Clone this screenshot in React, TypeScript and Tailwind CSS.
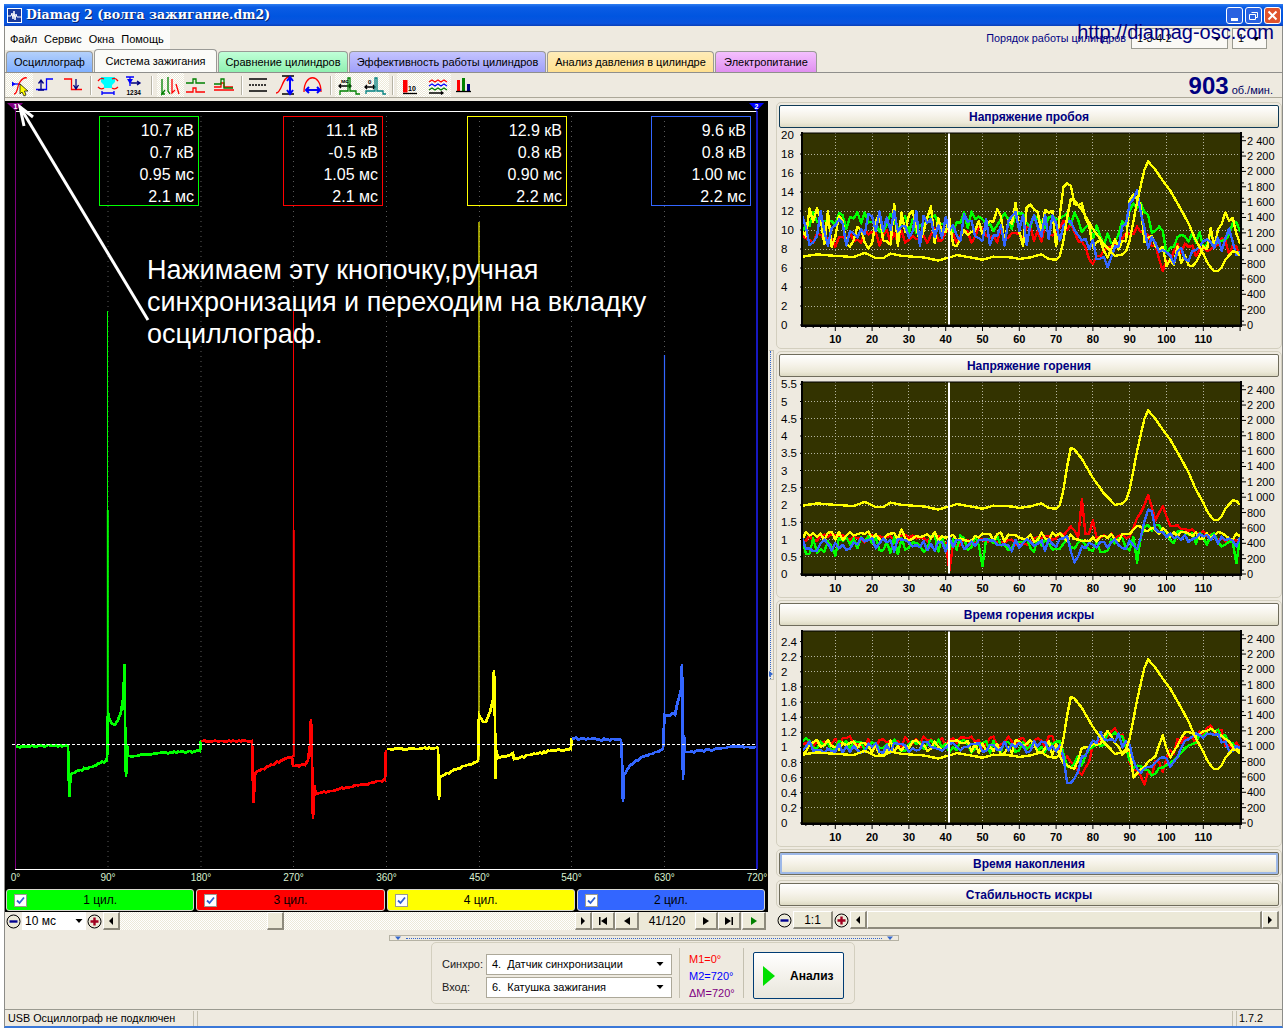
import type { ReactNode } from 'react'

type Pt = [number, number]
type Series = { color: string; base: Pt[]; amp: number; amp2: number; seed: number }

const GREEN = '#00ff00'
const RED = '#ff0000'
const YELLOW = '#ffff00'
const BLUE = '#3366ff'

function rnd(seed: number, n: number) {
  const v = Math.sin(n * 12.9898 + seed * 78.233) * 43758.5453
  return (v - Math.floor(v)) * 2 - 1
}

function interp(a: Pt[], n: number) {
  if (n <= a[0][0]) return a[0][1]
  for (let i = 1; i < a.length; i++) {
    if (n <= a[i][0]) {
      const t = (n - a[i - 1][0]) / (a[i][0] - a[i - 1][0])
      return a[i - 1][1] + (a[i][1] - a[i - 1][1]) * t
    }
  }
  return a[a.length - 1][1]
}

const RPM: Pt[] = [[1,890],[5,920],[10,900],[15,885],[18,940],[21,870],[23,870],[25,930],[28,900],[34,880],[38,840],[41,880],[43,910],[48,870],[50,850],[53,890],[58,880],[60,860],[63,880],[66,920],[68,860],[70,850],[71,900],[72,1100],[73,1400],[74,1640],[75,1620],[77,1500],[80,1250],[83,1050],[86,900],[88,920],[89,960],[90,1100],[91,1350],[92,1600],[94,2020],[95,2130],[97,2020],[99,1880],[101,1750],[104,1500],[106,1320],[108,1100],[110,930],[111,820],[112,750],[113,700],[114,700],[115,750],[116,850],[118,960],[119,950],[120,900]]

const breakdown: Series[] = [
  { color: RED, seed: 1, amp: 0.9, amp2: 0.7, base: [[1,9],[70,9.6],[72,11],[75,10],[78,7.5],[80,7],[85,8],[90,10],[94,9.5],[97,8],[99,6],[102,8],[107,8],[110,7.5],[115,8.5],[120,7.5]] },
  { color: GREEN, seed: 2, amp: 1.2, amp2: 1, base: [[1,10.8],[70,10.8],[75,11],[80,9.5],[82,10],[85,8],[88,10],[92,13],[94,12],[97,10],[100,8.5],[105,8.5],[108,9],[115,9],[118,11],[120,9.5]] },
  { color: YELLOW, seed: 3, amp: 2.4, amp2: 1.4, base: [[1,10.3],[70,10.5],[72,14.5],[75,13],[78,11.5],[80,9.5],[83,7.5],[87,8],[89,10],[91,14],[93,12],[95,8],[97,8],[98,9],[100,7.5],[104,7],[107,6],[109,8],[112,9],[114,10],[117,12],[120,9]] },
  { color: BLUE, seed: 4, amp: 1.9, amp2: 1, base: [[1,10.2],[70,10.2],[75,10.5],[78,9],[82,7.5],[85,6.5],[90,12],[92,14.5],[95,9],[98,8.5],[100,7],[105,7.5],[110,8],[115,8.5],[117,10],[119,8]] },
]

const burn: Series[] = [
  { color: RED, seed: 5, amp: 0.12, amp2: 0.08, base: [[1,1.05],[40,1],[41,0],[42,0.9],[70,1],[74,1.4],[76,1.1],[77,2.1],[78,1.1],[79,1.1],[80,1.5],[81,1.1],[90,1.1],[95,2.3],[97,1.6],[99,1.9],[101,1.4],[110,1.2],[115,1],[120,1]] },
  { color: GREEN, seed: 6, amp: 0.28, amp2: 0.22, base: [[1,0.85],[9,0.85],[10,0.4],[11,0.85],[26,0.85],[27,0.4],[28,0.85],[49,0.85],[50,0.4],[51,0.85],[91,0.85],[92,0.3],[93,0.85],[95,1.5],[100,1.1],[118,1],[119,0.3],[120,0.9]] },
  { color: YELLOW, seed: 7, amp: 0.14, amp2: 0.12, base: [[1,1.1],[27,1.1],[28,1.35],[29,1.1],[90,1.05],[93,1.4],[100,1.2],[120,1.05]] },
  { color: BLUE, seed: 8, amp: 0.2, amp2: 0.16, base: [[1,0.85],[70,0.85],[73,1.2],[75,0.4],[77,0.9],[90,0.85],[92,0.6],[95,1.9],[98,1.2],[105,1.05],[120,0.95]] },
]

const spark: Series[] = [
  { color: RED, seed: 9, amp: 0.08, amp2: 0.09, base: [[1,1.07],[71,1.07],[72,0.9],[74,0.75],[77,0.65],[80,1],[85,1.2],[88,1.15],[91,0.7],[94,0.55],[97,0.8],[99,0.7],[102,1],[107,1.1],[112,1.25],[116,1.1],[120,1]] },
  { color: GREEN, seed: 10, amp: 0.09, amp2: 0.09, base: [[1,1.03],[71,1],[74,0.7],[77,0.85],[82,1.1],[88,1.15],[91,0.7],[96,0.7],[100,0.85],[106,1],[112,1.2],[120,1]] },
  { color: YELLOW, seed: 11, amp: 0.1, amp2: 0.02, base: [[1,1],[70,1],[72,0.8],[75,0.7],[77,1],[82,1.05],[84,1.2],[88,0.92],[90,1],[91,0.6],[93,0.7],[97,0.9],[99,1.15],[101,0.85],[105,1.2],[108,1.15],[112,1.25],[116,1.1],[120,0.95]] },
  { color: BLUE, seed: 12, amp: 0.08, amp2: 0.08, base: [[1,1],[71,1],[73,0.6],[75,0.6],[78,0.9],[82,1.15],[86,1.15],[90,1],[92,0.65],[96,0.7],[99,0.9],[101,0.8],[105,1.1],[112,1.2],[116,1],[120,1]] },
]

const X = (n: number) => 56.3 + (n - 10) * 3.68

function Chart({ labels, unit, data }: { labels: string[]; unit: number; data: Series[] }) {
  const samples = Array.from({ length: 120 }, (_, i) => i + 1)
  const line = (s: Series) =>
    samples
      .map((n) => {
        const v = interp(s.base, n) + rnd(s.seed, n) * (n <= 71 ? s.amp : s.amp2)
        return `${X(n).toFixed(1)},${Math.min(195, 196 - v * unit).toFixed(1)}`
      })
      .join(' ')
  const rpmLine = samples.map((n) => `${X(n).toFixed(1)},${(196 - (interp(RPM, n) * 184.3) / 2400).toFixed(1)}`).join(' ')
  const rpmTicks = Array.from({ length: 13 }, (_, i) => i * 200)
  return (
    <svg width={500} height={218} viewBox="0 -1 500 218" className="block">
      <rect x={23} y={4} width={439} height={192} fill="#333300" />
      {labels.map((l, i) => {
        const y = 196 - parseFloat(l) * unit
        return (
          <g key={l}>
            {i > 0 && <line x1={23} x2={462} y1={y} y2={y} stroke="#b4b4a0" strokeDasharray="1 2" shapeRendering="crispEdges" />}
            <line x1={21} x2={24} y1={y} y2={y} stroke="#000" />
            <text x={2} y={y + 4} fontSize={11.5} fill="#000">{l}</text>
          </g>
        )
      })}
      {[10, 20, 30, 40, 50, 60, 70, 80, 90, 100, 110].map((n) => (
        <g key={n}>
          <line x1={X(n)} x2={X(n)} y1={4} y2={196} stroke="#b4b4a0" strokeDasharray="1 2" shapeRendering="crispEdges" />
          <text x={X(n)} y={214} fontSize={11} fontWeight={700} textAnchor="middle" fill="#000">{n}</text>
        </g>
      ))}
      {samples.filter((n) => n % 2 === 0).map((n) => (
        <line key={n} x1={X(n)} x2={X(n)} y1={196} y2={n % 10 === 0 ? 202 : 199} stroke="#000" />
      ))}
      {rpmTicks.map((r) => {
        const y = 196 - (r * 184.3) / 2400
        return (
          <g key={r}>
            <line x1={462} x2={467} y1={y} y2={y} stroke="#000" />
            <line x1={462} x2={465} y1={y - 3.84} y2={y - 3.84} stroke="#000" />
            <text x={468} y={y + 4} fontSize={11} fill="#000">{r >= 1000 ? `${Math.floor(r / 1000)} ${String(r % 1000).padStart(3, '0')}` : r}</text>
          </g>
        )
      })}
      {data.map((s) => (
        <polyline key={s.seed} points={line(s)} fill="none" stroke={s.color} strokeWidth={2.4} strokeLinejoin="round" shapeRendering="crispEdges" />
      ))}
      <polyline points={rpmLine} fill="none" stroke={YELLOW} strokeWidth={2.4} strokeLinejoin="round" shapeRendering="crispEdges" />
      <line x1={X(41)} x2={X(41)} y1={4} y2={196} stroke="#fff" strokeWidth={2} shapeRendering="crispEdges" />
      <path d="M23 196V4H462V196Z" fill="none" stroke="#000" />
      <path d="M23 3V197H462V3" fill="none" stroke="#000" strokeWidth={2} />
    </svg>
  )
}

function fuzz(points: Pt[], seed: number) {
  const out: string[] = []
  points.forEach((p, i) => {
    if (i > 0) {
      const prev = points[i - 1]
      const dx = p[0] - prev[0]
      if (dx > 6) {
        for (let x = 2; x < dx; x += 2) {
          const y = prev[1] + ((p[1] - prev[1]) * x) / dx + rnd(seed, prev[0] + x) * 0.9
          out.push(`${(prev[0] + x).toFixed(1)},${y.toFixed(1)}`)
        }
      }
    }
    out.push(`${p[0]},${p[1]}`)
  })
  return out.join(' ')
}

const traces: { color: string; pts: Pt[]; spike: [number, number, number, number][] }[] = [
  {
    color: GREEN,
    pts: [[16,746.5],[68,745.5],[68.5,770],[69.5,797],[70.5,775],[72,773],[80,770],[90,767],[100,763],[107,760.5],[108,712],[109,718],[112,724],[115,724.5],[118,720],[121,712],[123,700],[124,680],[124.5,664],[125,720],[126,777],[127,745],[128,756],[140,755],[160,753],[180,752],[200,751],[201,740]],
    spike: [[107.5,311,107.5,510],[107.8,510,107.8,725]],
  },
  {
    color: RED,
    pts: [[201,741],[252,741],[252.5,765],[253.5,803],[255,775],[256,772],[265,768],[280,761],[292,757],[293,766],[295,766],[305,765],[308,760],[310,745],[311,719],[312,760],[313,819],[314,785],[316,794],[330,791],[350,787],[370,783],[385,780],[386,750]],
    spike: [[293.5,311,293.5,530],[293.8,530,293.8,757]],
  },
  {
    color: YELLOW,
    pts: [[387,749],[438,748],[438.5,775],[439,800],[440,778],[441,776],[450,772],[465,766],[478,761],[479,715],[483,722],[486,722],[490,712],[493,700],[494,670],[495,720],[495.5,779],[496,750],[498,758],[510,755],[513,753],[514,759],[530,755],[550,751],[571,749],[571.5,738]],
    spike: [[479,222,479,760]],
  },
  {
    color: BLUE,
    pts: [[572,738.5],[621,740],[622,760],[623,802],[624,775],[626,772],[630,765],[640,758],[655,752],[663,749],[664.5,715],[670,716],[673,713],[675,715],[677,705],[681,690],[682,664],[682.5,720],[683,780],[684,735],[685,752],[690,752],[710,750],[730,747],[756,747]],
    spike: [[664.5,355,664.5,715]],
  },
]

const scopeTicks: [number, string][] = [[15.5,'0°'],[108,'90°'],[201,'180°'],[293.5,'270°'],[386.5,'360°'],[479.5,'450°'],[571.5,'540°'],[664.5,'630°'],[757,'720°']]

function ScopeCanvas() {
  return (
    <svg width={763} height={788} viewBox="5 101 763 788" className="block">
      {scopeTicks.slice(1, 8).map(([x]) => (
        <line key={x} x1={x} x2={x} y1={111} y2={869} stroke="#5a5a5a" strokeDasharray="1 4" />
      ))}
      <line x1={15} x2={757} y1={111.5} y2={111.5} stroke="#fff" />
      <line x1={15} x2={757} y1={869.5} y2={869.5} stroke="#fff" />
      <line x1={15.5} x2={15.5} y1={111} y2={869} stroke="#800080" />
      <line x1={757} x2={757} y1={111} y2={869} stroke="#2020ff" strokeWidth={1.5} />
      <path d="M7 103H23L15.5 111Z" fill="#800080" />
      <path d="M749 103H764L756.5 111Z" fill="#0000ff" />
      <text x={15.5} y={109} fontSize={7} fontWeight={700} textAnchor="middle" fill="#fff">1</text>
      <text x={756.5} y={109} fontSize={7} fontWeight={700} textAnchor="middle" fill="#fff">2</text>
      {traces.map((t) => (
        <g key={t.color}>
          {t.spike.map((s, i) => (
            <line key={i} x1={s[0]} x2={s[2]} y1={s[1]} y2={s[3]} stroke={t.color} strokeWidth={i === 0 && t.spike.length > 1 ? 1 : t.color === YELLOW || t.color === BLUE ? 1.2 : 2} />
          ))}
          <polyline points={fuzz(t.pts, t.pts.length)} fill="none" stroke={t.color} strokeWidth={2.8} shapeRendering="crispEdges" />
        </g>
      ))}
      <line x1={12} x2={757} y1={744.5} y2={744.5} stroke="#fff" strokeDasharray="3 2" />
      {scopeTicks.map(([x, l]) => (
        <text key={l} x={x} y={881} fontSize={10} textAnchor="middle" fill="#d8f0d0">{l}</text>
      ))}
      <path d="M148 320L20 107" stroke="#fff" strokeWidth={3} fill="none" />
      <path d="M24 126L20 107L33 117" stroke="#fff" strokeWidth={3} fill="none" />
    </svg>
  )
}

type Ink = [string, string, number?]
const toolIcons: { x: number; w: number; lit?: boolean; ink: Ink[]; text?: [string, number, number, number][] }[] = [
  { x: 6, w: 27, lit: true, ink: [['#0000ff', 'M12 85h8'], ['#ff0000', 'M14 95C18 95 17 86 20 83C22 80 24 78 27 79']] },
  { x: 33, w: 27, ink: [['#0000ff', 'M36 90.5h10.5V80H53'], ['#000080', 'M41 90V82M38.5 84.5L41 81L43.5 84.5M38 91h6']] },
  { x: 60, w: 27, ink: [['#ff0000', 'M64 80h7.5v10.5H82'], ['#000080', 'M76 80v9M73.5 86L76 90L78.5 86']] },
  { x: 94, w: 27, ink: [['#ff0000', 'M98 82q3-4 6-2M118 82q-3-4-6-2M98 88q3 3 6 1M118 88q-3 3-6 1'], ['#0000ff', 'M102 94h12M102 92v4M114 92v4']] },
  { x: 121, w: 26, ink: [['#0000ff', 'M126 78h8M130 78v9'], ['#000080', 'M131 84h9M137 82l3 2l-3 2']], text: [['1234', 126.5, 96, 6.5]] },
  { x: 157, w: 27, lit: true, ink: [['#008000', 'M162 80V95l3-4M168 78V92l2 3M161 95h4'], ['#ff0000', 'M172 80V94l3-3M176 85l3 10']] },
  { x: 184, w: 27, ink: [['#008000', 'M186 84h7v-4h3v4h9'], ['#ff0000', 'M186 93h7v-4h3v4h9']] },
  { x: 211, w: 27, ink: [['#ff0000', 'M214 88h7v-4h3v4h9M214 91h20'], ['#008000', 'M214 85h7v-5h3v9h9']] },
  { x: 244, w: 28, ink: [['#000', 'M249 80h18M249 92h18'], ['#000', 'M249 86h18']] },
  { x: 272, w: 28, ink: [['#ff0000', 'M276 94C282 94 282 78 289 78'], ['#000', 'M282 77h12M282 95h12'], ['#0000ff', 'M290 79V94M287 82l3-4l3 4M287 91l3 4l3-4', 2]] },
  { x: 300, w: 28, ink: [['#ff0000', 'M304 93C304 74 321 74 321 93'], ['#0000ff', 'M306 91H320M309 88l-3 3l3 3M317 88l3 3l-3 3', 2]] },
  { x: 335, w: 27, lit: true, ink: [['#000', 'M339 87h12M341 85l-2 2l2 2M349 85l2 2l-2 2'], ['#008000', 'M340 96v-4h8v-13h2v13h6v3h4']], text: [['мс', 341, 84, 6]] },
  { x: 362, w: 27, lit: true, ink: [['#000', 'M365 88h10M367 86l-2 2l2 2M373 86l2 2l-2 2'], ['#008080', 'M366 95v-3h9v-13h2v13h6v3h3']], text: [['0', 368, 85, 6]] },
  { x: 397, w: 27, lit: true, ink: [['#000', 'M403 94.5h14']], text: [['10', 408, 92, 7]] },
  { x: 424, w: 27, lit: true, ink: [['#ff0000', 'M429 83l3-2l3 2l3-2l3 2l3-2l3 2'], ['#0000ff', 'M429 87l3-2l3 2l3-2l3 2l3-2l3 2'], ['#008000', 'M429 91l3-2l3 2l3-2l3 2l3-2l3 2'], ['#000', 'M429 94h14M441 92.5l2 1.5l-2 1.5']] },
  { x: 451, w: 27, ink: [['#000', 'M456 92.5h15']] },
]

function ToolIcon({ i }: { i: number }) {
  const t = toolIcons[i]
  return (
    <svg width={t.w} height={24} viewBox={`${t.x} 74 ${t.w} 24`} className="block">
      {i === 3 && <path d="M101 78h14v5l-3 3v3h-8v-3l-3-3z" fill="#00ffff" />}
      {i === 4 && <path d="M127 80h6l-3 5z" fill="#0000ff" />}
      {i === 13 && <rect x={403} y={81} width={4.5} height={12.5} fill="#ff0000" />}
      {i === 15 && (
        <>
          <rect x={457} y={81} width={3} height={11} fill="#ff0000" />
          <rect x={462} y={79} width={3} height={13} fill="#008000" />
          <rect x={467} y={85} width={3} height={7} fill="#000080" />
        </>
      )}
      {t.ink.map((k, n) => (
        <path key={n} d={k[1]} stroke={k[0]} strokeWidth={k[2] ?? 1.3} fill="none" strokeDasharray={i === 8 && n === 1 ? '2 1' : undefined} />
      ))}
      {i === 0 && <path d="M20 85L28 92L24.5 92L26 96L24 97L22 93L20 95Z" fill="#ffff00" stroke="#000" strokeWidth={0.7} />}
      {i === 0 && <path d="M12 82.5v5l3.5-2.5z" fill="#0000ff" />}
      {t.text?.map(([s, x, y, size]) => (
        <text key={s} x={x} y={y} fontSize={size} fontWeight={700} fill="#000">{s}</text>
      ))}
    </svg>
  )
}

function ToolGroup({ from, to, className }: { from: number; to: number; className?: string }) {
  const idx = Array.from({ length: to - from + 1 }, (_, i) => from + i)
  return (
    <div className={`flex ${className ?? ''}`}>
      {idx.map((i) => (
        <div
          key={i}
          className={
            toolIcons[i].lit
              ? 'bg-[repeating-conic-gradient(#ffffff_0_25%,#ece9d8_0_50%)] bg-[length:2px_2px]'
              : ''
          }
        >
          <ToolIcon i={i} />
        </div>
      ))}
    </div>
  )
}

function ToolSep({ className }: { className: string }) {
  return <div className={`h-[19px] w-[2px] shrink-0 border-l border-[#b5b2a4] bg-white ${className}`} />
}

function Raised({ className, children }: { className?: string; children?: ReactNode }) {
  return (
    <div className={`flex shrink-0 items-center justify-center border-t border-l border-t-white border-l-white border-r-2 border-b-2 border-r-[#8d8a7c] border-b-[#8d8a7c] bg-[#ece9d8] ${className ?? ''}`}>
      {children}
    </div>
  )
}

function Glyph({ d, color = '#000' }: { d: string; color?: string }) {
  return (
    <svg width={10} height={10} viewBox="0 0 10 10" className="block">
      <path d={d} fill={color} />
    </svg>
  )
}

function Zoom({ plus }: { plus?: boolean }) {
  return (
    <div className="flex h-[18px] w-[17px] shrink-0 items-center justify-center">
      <svg width={15} height={15} viewBox="0 0 15 15" className="block">
        <circle cx={7.5} cy={7.5} r={6.5} fill="#ece9d8" stroke="#000" />
        {plus ? <path d="M3.5 7.5h8M7.5 3.5v8" stroke="#a00020" strokeWidth={2.4} /> : <path d="M3.5 7.5h8" stroke="#000090" strokeWidth={2.4} />}
      </svg>
    </div>
  )
}

function Check() {
  return (
    <div className="flex h-[13px] w-[13px] items-center justify-center border border-[#9a9a90] bg-white">
      <svg width={9} height={9} viewBox="0 0 9 9" className="block">
        <path d="M1 4.5L3.5 7L8 1.5" stroke="#2f5fd0" strokeWidth={1.8} fill="none" />
      </svg>
    </div>
  )
}

function Cylinder({ label, className }: { label: string; className: string }) {
  return (
    <div className={`relative flex h-[22px] items-center justify-center rounded-[3px] border border-[#d8d8d0] text-[12px] text-black ${className}`}>
      <div className="absolute left-[7px] top-[4px]">
        <Check />
      </div>
      {label}
    </div>
  )
}

function Readout({ color, rows }: { color: string; rows: string[] }) {
  return (
    <div className={`flex h-[90px] w-[100px] flex-col items-end border px-[4px] pt-[3px] text-[16px] leading-[22px] text-white ${color}`}>
      {rows.map((r, i) => (
        <div key={i}>{r}</div>
      ))}
    </div>
  )
}

function SectionButton({ title, focus, dark }: { title: string; focus?: boolean; dark?: boolean }) {
  const edge = dark ? 'border-[#0f3a56]' : 'border-[#6f6c5c]'
  return (
    <div
      className={`flex h-[23px] items-center justify-center rounded-[2px] border bg-[linear-gradient(180deg,#ffffff_0%,#f6f3ea_45%,#ece9d8_80%,#dcd9c2_100%)] text-[12px] font-bold text-[#000080] ${edge} ${focus ? 'shadow-[inset_0_0_0_2px_#9db8e8]' : ''}`}
    >
      {title}
    </div>
  )
}

function Panel({ children, short }: { children: ReactNode; short?: boolean }) {
  return <div className={`rounded-[5px] border border-[#d3cfbf] px-[2px] pt-[2px] ${short ? 'pb-px' : 'pb-[2px]'}`}>{children}</div>
}

function Tab({ label, className }: { label: string; className: string }) {
  return (
    <div className={`flex h-[21px] items-center justify-center rounded-t-[4px] border border-b-0 border-[#9a9a96] text-[11px] text-black ${className}`}>
      {label}
    </div>
  )
}

function Dropdown({ text }: { text: string }) {
  return (
    <div className="flex h-[21px] w-[186px] items-center justify-between border border-[#aca899] bg-white pl-[5px] pr-[6px] text-[11px] text-black">
      <span className="whitespace-pre">{text}</span>
      <Glyph d="M1.5 3h7L5 7z" />
    </div>
  )
}

export default function App() {
  return (
    <div className="h-[1032px] w-[1288px] overflow-hidden bg-white pt-1 pr-[5px] pb-1 pl-1 font-['Liberation_Sans',Arial,sans-serif]">
      <div className="relative flex h-full flex-col border-x border-b-2 border-x-[#8c8c88] border-b-[#3a78d8] bg-[#eeeae0]">
        <div className="-mx-px flex h-[22px] shrink-0 items-center bg-[linear-gradient(180deg,#2f7ef0_0%,#0b5ce4_14%,#0055e0_55%,#0a54de_88%,#0a3fb8_100%)] pl-[3px] pr-[2px]">
          <div className="flex h-[15px] w-[15px] items-center justify-center border border-white bg-[#1a3a9a]">
            <svg width={13} height={13} viewBox="0 0 13 13" className="block">
              <path d="M0 7h3l1-3l1 6l1-8l1 9l1-6l1 3h4" stroke="#fff" fill="none" />
            </svg>
          </div>
          <div className="ml-[4px] flex-1 font-['DejaVu_Serif',serif] text-[12.5px] font-bold text-white [text-shadow:1px_1px_0_#0a246a]">
            Diamag 2 (волга зажигание.dm2)
          </div>
          <div className="flex gap-[2px]">
            <div className="flex h-[17px] w-[17px] items-end justify-center rounded-[3px] border border-white bg-[#2a62e0] pb-[2px]">
              <div className="h-[3px] w-[7px] bg-white" />
            </div>
            <div className="flex h-[17px] w-[17px] items-center justify-center rounded-[3px] border border-white bg-[#2a62e0]">
              <svg width={11} height={11} viewBox="0 0 11 11" className="block">
                <path d="M3.5 2.5h6v5h-2M1.5 4.5h6v5h-6z" stroke="#fff" fill="none" />
              </svg>
            </div>
            <div className="flex h-[17px] w-[17px] items-center justify-center rounded-[3px] border border-white bg-[#e0532c]">
              <svg width={11} height={11} viewBox="0 0 11 11" className="block">
                <path d="M1.5 1.5l8 8M9.5 1.5l-8 8" stroke="#fff" strokeWidth={2} />
              </svg>
            </div>
          </div>
        </div>

        <div className="flex h-[24px] shrink-0 items-center">
          <div className="flex h-full w-[165px] items-center gap-[7px] bg-[#fbfbf9] pl-[5px] pt-[3px] text-[11px] text-black">
            <span>Файл</span>
            <span>Сервис</span>
            <span>Окна</span>
            <span>Помощь</span>
          </div>
          <div className="ml-auto flex items-center gap-[5px] pt-px pr-[15px] text-[10.8px]">
            <span className="text-[#000080]">Порядок работы цилиндров</span>
            <div className="flex h-[21px] w-[97px] items-center justify-between border border-[#9a9a90] bg-[#faf9f5] px-[5px] text-black">
              <span>1-3-4-2</span>
              <Glyph d="M1.5 3h7L5 7z" />
            </div>
            <div className="ml-[-1px] flex h-[21px] w-[35px] items-center justify-between border border-[#9a9a90] bg-[#faf9f5] px-[5px] text-black">
              <span>1</span>
              <Glyph d="M1.5 3h7L5 7z" />
            </div>
          </div>
        </div>

        <div className="absolute top-[16px] right-[8px] text-[20px] leading-[24px] text-[#000080]">http://diamag-osc.com</div>

        <div className="flex h-[23px] shrink-0 items-end gap-px border-b border-[#8f8f8c] pl-[1px]">
          <Tab label="Осциллограф" className="w-[87px] bg-[linear-gradient(180deg,#b4d0fa,#80b0ff)]" />
          <Tab label="Система зажигания" className="h-[23px] w-[123px] bg-[#fbfbf8]" />
          <Tab label="Сравнение цилиндров" className="w-[130px] bg-[linear-gradient(180deg,#c0ffd8,#90f0b0)]" />
          <Tab label="Эффективность работы цилиндров" className="w-[197px] bg-[linear-gradient(180deg,#c4c4ff,#a0a0f8)]" />
          <Tab label="Анализ давления в цилиндре" className="w-[167px] bg-[linear-gradient(180deg,#ffecb8,#ffe090)]" />
          <Tab label="Электропитание" className="w-[102px] bg-[linear-gradient(180deg,#f4c0ff,#e090f0)]" />
        </div>

        <div className="flex h-[25px] shrink-0 items-center border-b border-[#aca899] pl-px">
          <ToolGroup from={0} to={2} />
          <ToolSep className="ml-[3px]" />
          <ToolGroup from={3} to={4} className="ml-[2px]" />
          <ToolSep className="ml-[4px]" />
          <ToolGroup from={5} to={7} className="ml-[4px]" />
          <ToolSep className="ml-[3px]" />
          <ToolGroup from={8} to={10} className="ml-px" />
          <ToolSep className="ml-[2px]" />
          <ToolGroup from={11} to={12} className="ml-[3px]" />
          <ToolSep className="ml-[3px]" />
          <ToolGroup from={13} to={15} className="ml-[3px]" />
          <div className="ml-auto flex items-baseline gap-[3px] pt-[3px] pr-[9px] text-[#000080]">
            <span className="text-[24px] leading-[24px] font-bold">903</span>
            <span className="text-[11px] text-[#000060]">об./мин.</span>
          </div>
        </div>

        <div className="flex h-[833px] shrink-0">
          <div className="flex w-[763px] shrink-0 flex-col pt-[3px]">
            <div className="relative h-[788px] bg-black">
              <ScopeCanvas />
              <div className="absolute top-[15px] left-[94px] flex gap-[84px]">
                <Readout color="border-[#00ff00]" rows={['10.7 кВ', '0.7 кВ', '0.95 мс', '2.1 мс']} />
                <Readout color="border-[#ff0000]" rows={['11.1 кВ', '-0.5 кВ', '1.05 мс', '2.1 мс']} />
                <Readout color="border-[#ffff00]" rows={['12.9 кВ', '0.8 кВ', '0.90 мс', '2.2 мс']} />
                <Readout color="border-[#3366ff]" rows={['9.6 кВ', '0.8 кВ', '1.00 мс', '2.2 мс']} />
              </div>
              <div className="absolute top-[153px] left-[142px] w-[540px] text-[27px] leading-[32px] text-white">
                Нажимаем эту кнопочку,ручная синхронизация и переходим на вкладку осциллограф.
              </div>
            </div>
            <div className="grid h-[23px] grid-cols-4 gap-[2px] bg-black pr-[3px] pl-px">
              <Cylinder label="1 цил." className="bg-[#00ff00]" />
              <Cylinder label="3 цил." className="bg-[#ff0000]" />
              <Cylinder label="4 цил." className="bg-[#ffff00]" />
              <Cylinder label="2 цил." className="bg-[#3366ff]" />
            </div>
            <div className="flex h-[18px] items-stretch pr-[2px] text-[12px] text-black">
              <Zoom />
              <div className="flex w-[64px] shrink-0 items-center justify-between bg-white pr-[2px] pl-[3px]">
                <span>10 мс</span>
                <Glyph d="M1.5 3h7L5 7z" />
              </div>
              <Zoom plus />
              <Raised className="w-[17px]">
                <Glyph d="M7 1v8L3 5z" />
              </Raised>
              <div className="flex flex-1 bg-[repeating-conic-gradient(#ffffff_0_25%,#ece9d8_0_50%)] bg-[length:2px_2px] pl-[147px]">
                <Raised className="w-[17px]" />
              </div>
              <Raised className="w-[17px]">
                <Glyph d="M3 1v8l4-4z" />
              </Raised>
              <Raised className="w-[23px]">
                <Glyph d="M1 1h1.5v8H1zM9 1v8L3 5z" />
              </Raised>
              <Raised className="w-[24px]">
                <Glyph d="M8 1v8L2 5z" />
              </Raised>
              <div className="flex w-[56px] shrink-0 items-center justify-center bg-[#ece9d8]">41/120</div>
              <Raised className="w-[23px]">
                <Glyph d="M2 1v8l6-4z" />
              </Raised>
              <Raised className="w-[23px]">
                <Glyph d="M1 1v8l6-4zM7.5 1H9v8H7.5z" />
              </Raised>
              <Raised className="ml-px w-[24px]">
                <Glyph d="M2 1v8l6-4z" color="#008000" />
              </Raised>
            </div>
          </div>

          <div className="flex w-[6px] shrink-0 flex-col items-center justify-center">
            <div className="relative h-[330px] w-[5px] border-y border-r border-[#c4c0b0]">
              <div className="ml-px h-full border-l border-dotted border-[#3366cc]" />
              <div className="absolute bottom-[2px] left-0 h-0 w-0 border-y-[3px] border-l-[4px] border-y-transparent border-l-[#3366cc]" />
            </div>
          </div>

          <div className="flex flex-1 flex-col gap-[2px] pt-[4px] pl-[2px]">
            <Panel>
              <SectionButton title="Напряжение пробоя" dark />
              <Chart labels={['20', '18', '16', '14', '12', '10', '8', '6', '4', '2', '0']} unit={9.5} data={breakdown} />
            </Panel>
            <Panel>
              <SectionButton title="Напряжение горения" />
              <Chart labels={['5.5', '5', '4.5', '4', '3.5', '3', '2.5', '2', '1.5', '1', '0.5', '0']} unit={34.5} data={burn} />
            </Panel>
            <Panel>
              <SectionButton title="Время горения искры" />
              <Chart labels={['2.4', '2.2', '2', '1.8', '1.6', '1.4', '1.2', '1', '0.8', '0.6', '0.4', '0.2', '0']} unit={75.6} data={spark} />
            </Panel>
            <Panel short>
              <SectionButton title="Время накопления" focus />
            </Panel>
            <div className="mt-px">
              <Panel short>
                <SectionButton title="Стабильность искры" />
              </Panel>
            </div>
            <div className="mt-px flex h-[18px] items-stretch text-[12px] text-black">
              <Zoom />
              <Raised className="w-[40px]">1:1</Raised>
              <Zoom plus />
              <Raised className="w-[17px]">
                <Glyph d="M7 1v8L3 5z" />
              </Raised>
              <Raised className="flex-1" />
              <Raised className="w-[17px]">
                <Glyph d="M3 1v8l4-4z" />
              </Raised>
              <div className="w-[3px]" />
            </div>
          </div>
        </div>

        <div className="flex h-[11px] shrink-0 items-center justify-center">
          <div className="mt-[3px] flex h-[6px] w-[510px] items-center justify-between border border-[#b5b2a4] px-[3px]">
            <Glyph d="M2 3.5h6L5 7z" color="#3366cc" />
            <div className="mx-[3px] flex-1 border-t border-dotted border-[#3366cc]" />
            <Glyph d="M2 3.5h6L5 7z" color="#3366cc" />
          </div>
        </div>

        <div className="flex h-[65px] shrink-0 justify-center pr-[1px]">
          <div className="flex h-[62px] w-[424px] items-center rounded-[5px] border border-[#d3cfbf] pt-[5px] pl-[10px] text-[11px]">
            <div className="flex flex-col gap-[2px]">
              <div className="flex items-center">
                <span className="w-[44px] text-[#202020]">Синхро:</span>
                <Dropdown text="4.  Датчик синхронизации" />
              </div>
              <div className="flex items-center">
                <span className="w-[44px] text-[#202020]">Вход:</span>
                <Dropdown text="6.  Катушка зажигания" />
              </div>
            </div>
            <div className="-mt-[5px] ml-[7px] h-[50px] w-px bg-[#c4c0b0]" />
            <div className="ml-[9px] flex w-[54px] flex-col gap-[3px] text-[11px] leading-[14px]">
              <span className="text-[#ff0000]">M1=0°</span>
              <span className="text-[#0000ff]">M2=720°</span>
              <span className="text-[#800080]">ΔM=720°</span>
            </div>
            <div className="-mt-[5px] h-[50px] w-px bg-[#c4c0b0]" />
            <div className="ml-[9px] flex h-[47px] w-[91px] items-center rounded-[2px] border border-[#003c74] bg-[linear-gradient(180deg,#ffffff,#f4f2ec_50%,#e8e6dc)] pl-[9px]">
              <svg width={13} height={20} viewBox="0 0 13 20" className="block">
                <path d="M0 0L12 10L0 20Z" fill="#00e000" />
              </svg>
              <span className="ml-[14px] text-[12px] font-bold text-black">Анализ</span>
            </div>
          </div>
        </div>

        <div className="mt-auto flex h-[17px] shrink-0 gap-[3px] border-t border-[#9a9a90] bg-[#eeeae0] pt-px text-[10.8px] text-black">
          <div className="flex w-[189px] items-center border-r border-[#c4c0b0] pl-[3px]">USB Осциллограф не подключен</div>
          <div className="flex-1 border-x border-[#c4c0b0]" />
          <div className="flex w-[46px] items-center border-l border-[#c4c0b0] pl-[2px]">1.7.2</div>
        </div>
      </div>
    </div>
  )
}
